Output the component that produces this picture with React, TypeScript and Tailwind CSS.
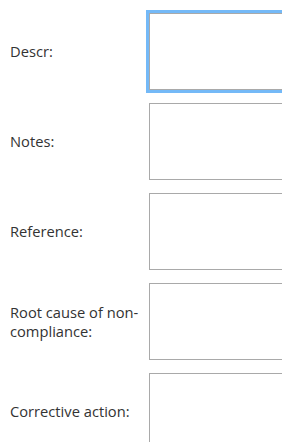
import React from 'react'

const fields = ['Descr:', 'Notes:', 'Reference:', 'Root cause of non-compliance:', 'Corrective action:']

export default function App() {
    return (
        <div className="w-[282px] h-[442px] overflow-hidden bg-white pt-[13px] pl-[10px] text-[14.7px] leading-[19px] text-[#333] font-['Open_Sans',sans-serif]">
            <div className="flex flex-col gap-[13px]">
                {fields.map((label, i) => (
                    <div key={label} className="flex items-center">
                        <div className="w-[139px] shrink-0">{label}</div>
                        <div
                            className={
                                i === 0
                                    ? 'w-[200px] shrink-0 h-[77px] border border-[#a9a9a9] bg-white ring-[3px] ring-[#74b9f7]'
                                    : 'w-[200px] shrink-0 h-[77px] border border-[#a9a9a9] bg-white'
                            }
                        />
                    </div>
                ))}
            </div>
        </div>
    )
}
